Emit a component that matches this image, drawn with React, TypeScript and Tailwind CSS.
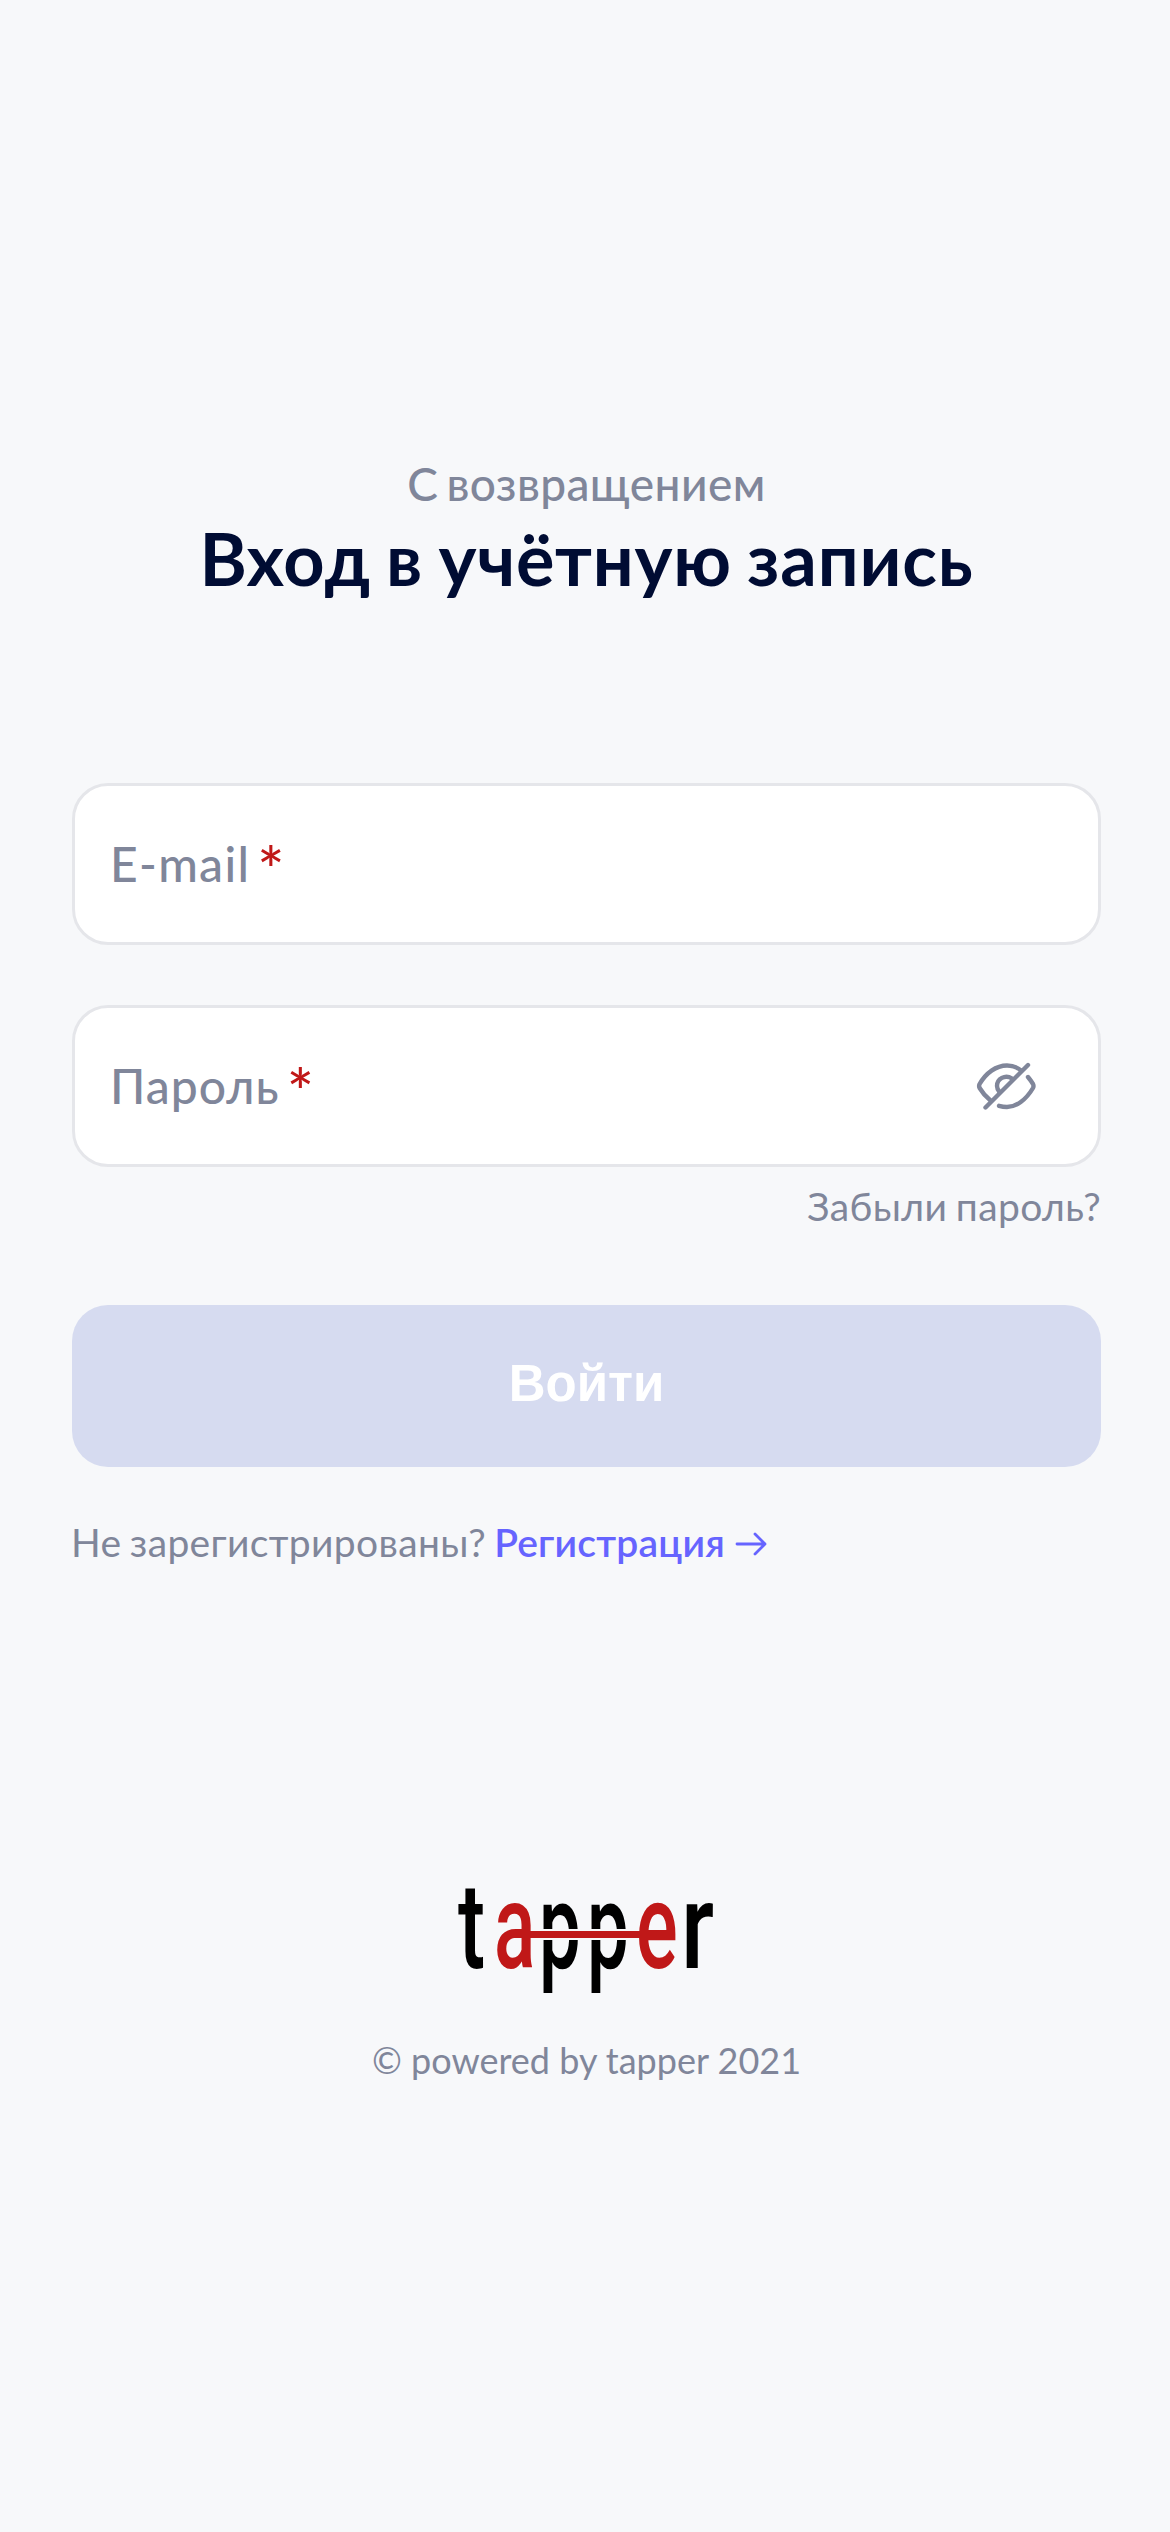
import React from 'react';

const letters = [
  { c: 't', x: 0, s: 0.68, red: false },
  { c: 'a', x: 36, s: 0.64, red: true },
  { c: 'p', x: 81, s: 0.62, red: false },
  { c: 'p', x: 129, s: 0.62, red: false },
  { c: 'e', x: 178, s: 0.65, red: true },
  { c: 'r', x: 223, s: 0.78, red: false },
];

function Logo() {
  return (
    <svg width="258" height="104" viewBox="0 0 258 104" className="overflow-visible" fontFamily="Roboto" fontSize="120" fontWeight="500">
      {letters.filter((l) => !l.red).map((l) => (
        <text key={l.x} transform={`translate(${l.x} 78) scale(${l.s} 1)`} fill="#000">{l.c}</text>
      ))}
      <rect x="74" y="39" width="108" height="11" fill="#f7f8fa" />
      {letters.filter((l) => l.red).map((l) => (
        <text key={l.x} transform={`translate(${l.x} 78) scale(${l.s} 1)`} fill="#c01818">{l.c}</text>
      ))}
      <rect x="50" y="41" width="160" height="7" fill="#c01818" />
    </svg>
  );
}

function EyeOff() {
  return (
    <svg width="60" height="50" viewBox="0 0 60 50" fill="none" stroke="#80869a" strokeWidth="4.4" strokeLinecap="round" strokeLinejoin="round">
      <path d="M14 39C9 35 6 31 3.6 27Q2.6 25 3.6 23C10 12 20 4.5 31 4.5Q39 4.5 45 9.500" />
      <path d="M52 16Q54.500 19 57 23Q58 25 57 27C50 39 40 46 31 46Q27 46 23 44.800" />
      <path d="M36 17.500C29 13 21 18 21 25Q21 28 23.500 31" />
      <path d="M9.500 46.500L52 4" />
    </svg>
  );
}

function Field({ label, children }: { label: React.ReactNode; children?: React.ReactNode }) {
  return (
    <div className="flex h-[162px] items-center justify-between rounded-[36px] border-3 border-[#e5e6ea] bg-white pl-[35px] pr-[62px] text-[48px] font-medium">
      <div className="flex items-baseline whitespace-nowrap">
        {label}
        <span className="relative top-[11px] ml-[7px] text-[64px] leading-0 font-medium text-[#c01818]">*</span>
      </div>
      {children}
    </div>
  );
}

export default function App() {
  return (
    <main className="flex h-[2532px] w-[1170px] flex-col bg-[#f7f8fa] pl-[72px] pr-[69px] pt-[454px] font-['Lato',sans-serif] text-[#80869a]">
      <header className="flex flex-col items-center whitespace-nowrap">
        <p className="h-[60px] text-[46px] leading-[60px] font-medium tracking-[0.4px] [word-spacing:-4px]">С возвращением</p>
        <h1 className="h-[90px] text-[72px] leading-[88px] font-bold tracking-[0.8px] [word-spacing:-3px] text-[#000c33]">Вход в учётную запись</h1>
      </header>
      <form className="mt-[179px] flex flex-col">
        <Field label={<span className="tracking-[1.3px]">E-mail</span>} />
        <div className="mt-[60px]">
          <Field label={<span className="tracking-[1px]">Пароль</span>}><EyeOff /></Field>
        </div>
        <a className="mt-[12px] h-[54px] self-end text-[39px] leading-[54px] tracking-[0.4px] [word-spacing:-2px]">Забыли пароль?</a>
        <button type="button" className="mt-[72px] h-[162px] rounded-[36px] bg-[#d6dbf0] pb-1 font-['Liberation_Sans',sans-serif] text-[51px] font-bold text-white">Войти</button>
      </form>
      <p className="-ml-px mt-[48px] flex h-[54px] items-center whitespace-nowrap text-[39px] leading-[54px]">
        <span className="tracking-[0.35px] [word-spacing:-2px]">Не зарегистрированы?</span>
        <a className="ml-[8px] font-semibold tracking-[0.2px] text-[#6664ff]">Регистрация</a>
        <svg className="relative top-[2px] ml-[10px]" width="32" height="24" viewBox="0 0 32 24" fill="none" stroke="#6664ff" strokeWidth="2.800" strokeLinecap="round" strokeLinejoin="round">
          <path d="M2 12H30M20 2L30 12L20 22" />
        </svg>
      </p>
      <footer className="mt-[321px] flex flex-col items-center">
        <Logo />
        <p className="mt-[41px] h-[50px] text-[36px] leading-[50px] whitespace-nowrap">© powered by tapper 2021</p>
      </footer>
    </main>
  );
}
